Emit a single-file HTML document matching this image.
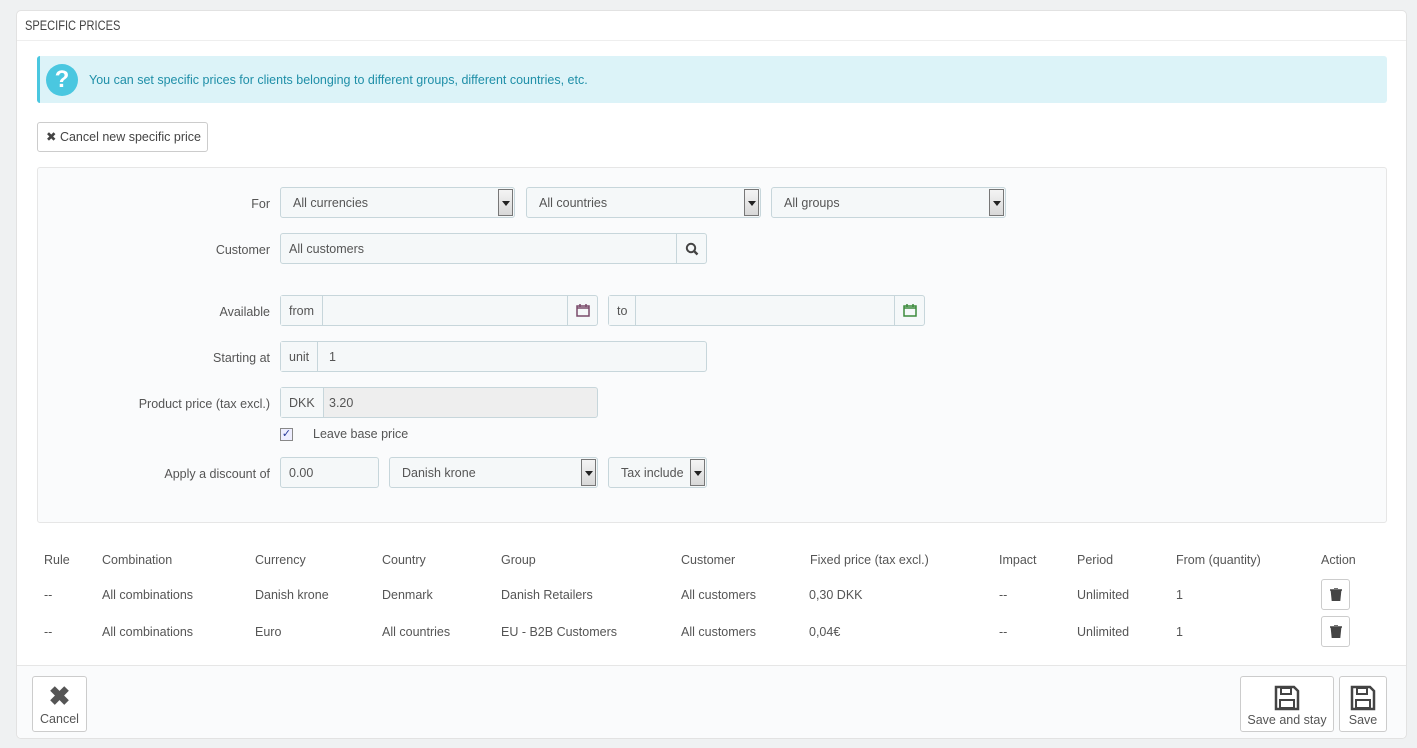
<!DOCTYPE html><html><head><style>
*{box-sizing:border-box;margin:0;padding:0}
body{width:1417px;height:748px;background:#eff1f2;font-family:"Liberation Sans",sans-serif;font-size:12.5px;color:#555;position:relative;overflow:hidden}
.a{position:absolute}
.panel{left:16px;top:10px;width:1391px;height:729px;background:#fff;border:1px solid #e2e2e2;border-radius:5px}
.inp{position:absolute;background:#f5f8f9;border:1px solid #c7d6db;border-radius:3px;height:31px;line-height:31px;padding-left:12px;color:#555}
.sel .arr{position:absolute;right:1px;top:1px;width:15px;height:27px;border:1px solid #777;background:linear-gradient(#f4f4f4,#d8d8d8)}
.sel .arr:after{content:"";position:absolute;left:3px;top:11px;border:4px solid transparent;border-top:5px solid #222}
.addon{position:absolute;top:0;height:29px;border-right:1px solid #c7d6db;padding:0 8px;background:#f5f8f9}
.lbl{position:absolute;text-align:right;width:240px;left:30px}
.th{position:absolute;top:553px;color:#555}
.td{position:absolute;color:#555}
.btn{position:absolute;background:#fff;border:1px solid #ccc;border-radius:3px}
</style></head><body>
<div class="a panel"></div>
<div class="a" style="left:25px;top:18px;font-size:13.5px;color:#444;transform:scaleX(.82);transform-origin:left">SPECIFIC PRICES</div>
<div class="a" style="left:17px;top:40px;width:1389px;height:1px;background:#eee"></div>
<div class="a" style="left:37px;top:56px;width:1350px;height:47px;background:#dcf3f8;border-left:3px solid #4ac7e0;border-radius:3px"></div>
<div class="a" style="left:46px;top:64px;width:32px;height:32px;border-radius:50%;background:#4ac7e0;color:#fff;font-weight:bold;font-size:24px;text-align:center;line-height:32px">?</div>
<div class="a" style="left:89px;top:73px;color:#1f8fa8">You can set specific prices for clients belonging to different groups, different countries, etc.</div>
<div class="btn" style="left:37px;top:122px;width:171px;height:30px;line-height:29px;padding-left:8px;color:#444">✖ Cancel new specific price</div>
<div class="a" style="left:37px;top:167px;width:1350px;height:356px;background:#fafbfc;border:1px solid #e6e6e6;border-radius:3px"></div>
<div class="lbl" style="top:197px">For</div>
<div class="inp sel" style="left:280px;top:187px;width:235px">All currencies<div class="arr"></div></div>
<div class="inp sel" style="left:526px;top:187px;width:235px">All countries<div class="arr"></div></div>
<div class="inp sel" style="left:771px;top:187px;width:235px">All groups<div class="arr"></div></div>
<div class="lbl" style="top:243px">Customer</div>
<div class="inp" style="left:280px;top:233px;width:427px;padding-left:8px">All customers<div class="a" style="right:0;top:0;width:30px;height:29px;border-left:1px solid #c7d6db;text-align:center;line-height:0"><svg width="14" height="14" viewBox="0 0 14 14" style="margin-top:8px"><circle cx="6" cy="6" r="4.2" fill="none" stroke="#444" stroke-width="2"/><path d="M9 9l3.5 3.5" stroke="#444" stroke-width="2.4"/></svg></div></div>
<div class="lbl" style="top:305px">Available</div>
<div class="inp" style="left:280px;top:295px;width:318px"><div class="addon" style="left:0">from</div><div class="a" style="right:0;top:0;width:30px;height:29px;border-left:1px solid #c7d6db;line-height:0"><svg width="14" height="14" style="margin:7px 0 0 8px"><rect x="1" y="3" width="12" height="10" fill="none" stroke="#7a4a6a" stroke-width="1.5"/><path d="M1 5h12M4 1v3M10 1v3" stroke="#7a4a6a" stroke-width="1.5"/></svg></div></div>
<div class="inp" style="left:608px;top:295px;width:317px"><div class="addon" style="left:0">to</div><div class="a" style="right:0;top:0;width:30px;height:29px;border-left:1px solid #c7d6db;line-height:0"><svg width="14" height="14" style="margin:7px 0 0 8px"><rect x="1" y="3" width="12" height="10" fill="none" stroke="#3c8a3c" stroke-width="1.5"/><path d="M1 5h12M4 1v3M10 1v3" stroke="#3c8a3c" stroke-width="1.5"/></svg></div></div>
<div class="lbl" style="top:351px">Starting at</div>
<div class="inp" style="left:280px;top:341px;width:427px"><div class="addon" style="left:0">unit</div><span style="position:absolute;left:48px">1</span></div>
<div class="lbl" style="top:397px">Product price (tax excl.)</div>
<div class="inp" style="left:280px;top:387px;width:318px;background:#eee"><div class="addon" style="left:0">DKK</div><span style="position:absolute;left:48px">3.20</span></div>
<div class="a" style="left:280px;top:428px;width:13px;height:13px;border:1px solid #888;background:#eef;color:#2a3c9a;font-size:11px;line-height:11px;text-align:center">✓</div>
<div class="a" style="left:313px;top:427px">Leave base price</div>
<div class="lbl" style="top:467px">Apply a discount of</div>
<div class="inp" style="left:280px;top:457px;width:99px;padding-left:8px">0.00</div>
<div class="inp sel" style="left:389px;top:457px;width:209px">Danish krone<div class="arr"></div></div>
<div class="inp sel" style="left:608px;top:457px;width:99px;padding-left:12px;overflow:hidden">Tax include<div class="arr"></div></div>
<div class="th" style="left:44px">Rule</div><div class="th" style="left:102px">Combination</div><div class="th" style="left:255px">Currency</div><div class="th" style="left:382px">Country</div><div class="th" style="left:501px">Group</div><div class="th" style="left:681px">Customer</div><div class="th" style="left:810px">Fixed price (tax excl.)</div><div class="th" style="left:999px">Impact</div><div class="th" style="left:1077px">Period</div><div class="th" style="left:1176px">From (quantity)</div><div class="th" style="left:1321px">Action</div>
<div class="td" style="top:588px;left:44px">--</div><div class="td" style="top:588px;left:102px">All combinations</div><div class="td" style="top:588px;left:255px">Danish krone</div><div class="td" style="top:588px;left:382px">Denmark</div><div class="td" style="top:588px;left:501px">Danish Retailers</div><div class="td" style="top:588px;left:681px">All customers</div><div class="td" style="top:588px;left:809px">0,30 DKK</div><div class="td" style="top:588px;left:999px">--</div><div class="td" style="top:588px;left:1077px">Unlimited</div><div class="td" style="top:588px;left:1176px">1</div>
<div class="td" style="top:625px;left:44px">--</div><div class="td" style="top:625px;left:102px">All combinations</div><div class="td" style="top:625px;left:255px">Euro</div><div class="td" style="top:625px;left:382px">All countries</div><div class="td" style="top:625px;left:501px">EU - B2B Customers</div><div class="td" style="top:625px;left:681px">All customers</div><div class="td" style="top:625px;left:809px">0,04€</div><div class="td" style="top:625px;left:999px">--</div><div class="td" style="top:625px;left:1077px">Unlimited</div><div class="td" style="top:625px;left:1176px">1</div>
<div class="btn" style="left:1321px;top:579px;width:29px;height:31px"><svg width="12" height="13" style="margin:8px 0 0 8px"><path d="M0 2h12M4 0h4M1.5 3h9l-1 10h-7z" stroke="#444" stroke-width="1.6" fill="#444"/></svg></div>
<div class="btn" style="left:1321px;top:616px;width:29px;height:31px"><svg width="12" height="13" style="margin:8px 0 0 8px"><path d="M0 2h12M4 0h4M1.5 3h9l-1 10h-7z" stroke="#444" stroke-width="1.6" fill="#444"/></svg></div>
<div class="a" style="left:17px;top:665px;width:1389px;height:73px;background:#fafbfc;border-top:1px solid #e6e6e6;border-radius:0 0 5px 5px"></div>
<div class="btn" style="left:32px;top:676px;width:55px;height:56px;text-align:center"><div style="font-size:26px;color:#555;line-height:30px;margin-top:4px;font-weight:bold">✖</div><div style="margin-top:1px">Cancel</div></div>
<div class="btn" style="left:1240px;top:676px;width:94px;height:56px;text-align:center"><svg width="26" height="26" viewBox="0 0 26 26" style="margin-top:8px"><path d="M2 2h18l4 4v18H2z" fill="none" stroke="#444" stroke-width="2.5"/><rect x="7" y="3" width="10" height="6" fill="none" stroke="#444" stroke-width="2"/><rect x="6" y="15" width="14" height="8" fill="none" stroke="#444" stroke-width="2"/></svg><div style="margin-top:-1px">Save and stay</div></div>
<div class="btn" style="left:1339px;top:676px;width:48px;height:56px;text-align:center"><svg width="26" height="26" viewBox="0 0 26 26" style="margin-top:8px"><path d="M2 2h18l4 4v18H2z" fill="none" stroke="#444" stroke-width="2.5"/><rect x="7" y="3" width="10" height="6" fill="none" stroke="#444" stroke-width="2"/><rect x="6" y="15" width="14" height="8" fill="none" stroke="#444" stroke-width="2"/></svg><div style="margin-top:-1px">Save</div></div>
</body></html>
